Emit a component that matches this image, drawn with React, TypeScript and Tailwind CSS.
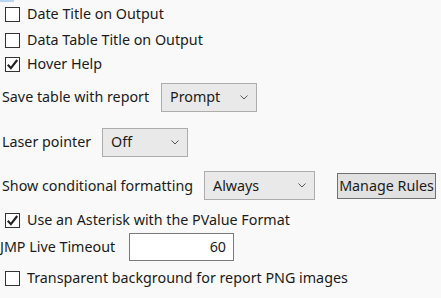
const font = { fontFamily: '"Segoe UI", "Noto Sans", "Open Sans", sans-serif' };

function Check({ checked }: { checked?: boolean }) {
  return (
    <span className="w-[15px] h-[15px] border border-[#333] bg-white flex items-center justify-center shrink-0">
      {checked && (
        <svg width="13" height="13" viewBox="0 0 13 13">
          <path d="M1.8 6.8 L4.9 10.2 L11.2 2" fill="none" stroke="#222" strokeWidth="2.1" />
        </svg>
      )}
    </span>
  );
}

function Select({ value, width }: { value: string; width: string }) {
  return (
    <div className={`${width} h-[29px] border border-[#adadad] bg-[#e9e9e9] flex items-center justify-between pl-2 pr-2 whitespace-nowrap`}>
      <span>{value}</span>
      <svg width="8" height="5" viewBox="0 0 8 5">
        <path d="M0.5 0.5 L4 4 L7.5 0.5" fill="none" stroke="#555" strokeWidth="1" />
      </svg>
    </div>
  );
}

export default function App() {
  return (
    <div className="w-[441px] h-[298px] bg-[#f9f9f9] text-[#1b1b1b] text-[14.3px] relative overflow-hidden" style={font}>
      <div className="absolute left-0 top-0 w-[14px] h-[2px] bg-[#b6d6f2]" />

      <div className="flex items-center gap-[7px] pl-[5px] h-[28px]">
        <Check />
        <span>Date Title on Output</span>
      </div>
      <div className="flex items-center gap-[7px] pl-[5px] h-[24px]">
        <Check />
        <span>Data Table Title on Output</span>
      </div>
      <div className="flex items-center gap-[7px] pl-[5px] h-[24px]">
        <Check checked />
        <span>Hover Help</span>
      </div>

      <div className="flex items-center pl-[2px] mt-[6px] h-[30px]">
        <span className="w-[159px]">Save table with report</span>
        <Select value="Prompt" width="w-[96px]" />
      </div>

      <div className="flex items-center pl-[2px] mt-[15px] h-[30px]">
        <span className="w-[100px]">Laser pointer</span>
        <Select value="Off" width="w-[86px]" />
      </div>

      <div className="flex items-center pl-[2px] mt-[14px] h-[29px]">
        <span className="w-[202px]">Show conditional formatting</span>
        <Select value="Always" width="w-[111px]" />
        <button className="ml-[22px] h-[26px] w-[99px] border border-[#707070] bg-[#e1e1e1] flex items-center justify-center whitespace-nowrap">
          Manage Rules
        </button>
      </div>

      <div className="flex items-center gap-[7px] pl-[5px] mt-[9px] h-[22px]">
        <Check checked />
        <span>Use an Asterisk with the PValue Format</span>
      </div>

      <div className="flex items-center mt-[2px] h-[28px]">
        <span className="w-[129px]">JMP Live Timeout</span>
        <div className="w-[105px] h-[28px] border border-[#7a7a7a] bg-white flex items-center justify-end pr-[7px]">60</div>
      </div>

      <div className="flex items-center gap-[7px] pl-[5px] mt-[3px] h-[28px]">
        <Check />
        <span>Transparent background for report PNG images</span>
      </div>
    </div>
  );
}
